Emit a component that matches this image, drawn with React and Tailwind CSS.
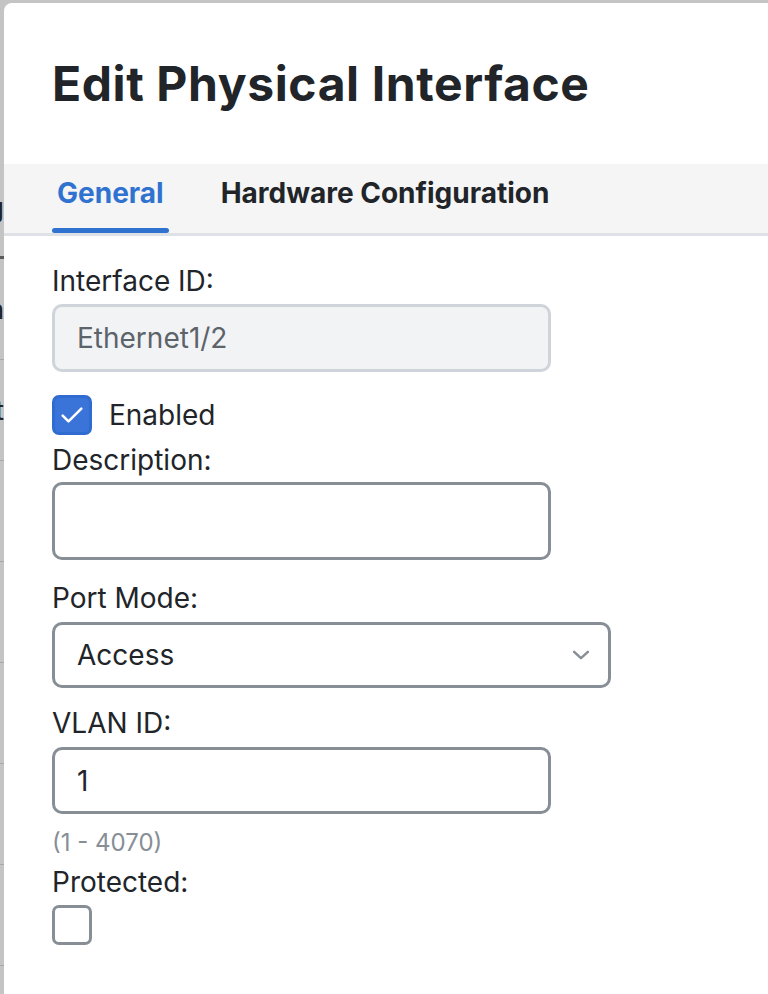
import React from "react";

const font = { fontFamily: "Inter, 'Liberation Sans', sans-serif" };

const Checkbox = ({ checked }) =>
  checked ? (
    <span className="flex h-[40px] w-[40px] shrink-0 items-center justify-center rounded-[7px] border-[3px] border-[#2f6bd1] bg-[#3a74d9]">
      <svg width="28" height="28" viewBox="0 0 24 24" fill="none">
        <path d="M4 12.5l5 5L20 6.5" stroke="#fff" strokeWidth="2.2" strokeLinecap="round" strokeLinejoin="round" />
      </svg>
    </span>
  ) : (
    <span className="block h-[40px] w-[40px] shrink-0 rounded-[7px] border-[3px] border-[#878e96] bg-white" />
  );

const Label = ({ children, className = "" }) => (
  <div className={`h-[30px] text-[28px] leading-[30px] text-[#212529] ${className}`}>{children}</div>
);

// bits of the page behind the modal, clipped at the left edge
const BackdropStrip = () => (
  <div className="flex w-[4px] shrink-0 flex-col items-end overflow-hidden">
    <div className="h-[158px] w-[60px] shrink-0" />
    {["Config", "Data", "Port", "", "", "", "", "", ""].map((t, i) => (
      <div
        key={i}
        className={`flex h-[101px] w-[60px] shrink-0 items-center justify-end text-[26px] text-[#222] ${
          i === 0 ? "border-b-[3px] border-[#5a5a5a]" : "border-b border-[#a9a9a9]"
        }`}
      >
        {t}
      </div>
    ))}
  </div>
);

export default function App() {
  return (
    <div className="flex h-[994px] w-[768px] overflow-hidden bg-[#c4c4c4]" style={font}>
      <BackdropStrip />
      <div className="flex flex-1 flex-col pt-[3px]">
        <div className="flex flex-1 flex-col rounded-tl-[8px] bg-white">
          <div className="flex h-[161px] items-center pl-[48px]">
            <h1 className="text-[48px] font-bold tracking-[0.6px] text-[#212529]">Edit Physical Interface</h1>
          </div>

          <div className="flex h-[72px] items-end gap-[47px] border-b-[3px] border-[#dee2e6] bg-[#f5f5f5] pl-[48px]">
            <div className="flex h-full flex-col justify-between">
              <span className="px-[5px] pt-[13px] text-[28px] font-bold leading-[32px] text-[#2f72d0]">General</span>
              <span className="block h-[5px] rounded-full bg-[#2f72d0]" />
            </div>
            <div className="flex h-full flex-col justify-between">
              <span className="px-[5px] pt-[13px] text-[28px] font-bold leading-[32px] text-[#212529]">
                Hardware Configuration
              </span>
              <span className="block h-[5px]" />
            </div>
          </div>

          <div className="flex flex-col pl-[48px]">
            <Label className="mt-[30px]">Interface ID:</Label>
            <div className="mt-[8px] flex h-[68px] w-[499px] items-center rounded-[10px] border-[3px] border-[#ced4da] bg-[#f1f3f5] px-[22px] text-[28px] text-[#5c636a]">
              Ethernet1/2
            </div>

            <label className="mt-[23px] flex items-center gap-[17px]">
              <Checkbox checked />
              <span className="text-[28px] leading-[30px] text-[#212529]">Enabled</span>
            </label>

            <Label className="mt-[10px]">Description:</Label>
            <div className="mt-[7px] h-[78px] w-[499px] rounded-[10px] border-[3px] border-[#878e96] bg-white" />

            <Label className="mt-[23px]">Port Mode:</Label>
            <div className="mt-[9px] flex h-[66px] w-[559px] items-center justify-between rounded-[10px] border-[3px] border-[#878e96] bg-white pl-[22px] pr-[17px] text-[28px] text-[#212529]">
              <span>Access</span>
              <svg width="20" height="20" viewBox="0 0 16 16" fill="none">
                <path d="M2.5 5.5l5.5 5 5.5-5" stroke="#868e96" strokeWidth="2" strokeLinecap="round" strokeLinejoin="round" />
              </svg>
            </div>

            <Label className="mt-[20px]">VLAN ID:</Label>
            <div className="mt-[9px] flex h-[67px] w-[499px] items-center rounded-[10px] border-[3px] border-[#878e96] bg-white px-[22px] text-[28px] text-[#212529]">
              1
            </div>
            <div className="mt-[16px] h-[26px] text-[24px] leading-[26px] text-[#878e96]">(1 - 4070)</div>

            <Label className="mt-[11px]">Protected:</Label>
            <div className="mt-[8px]">
              <Checkbox />
            </div>
          </div>
        </div>
      </div>
    </div>
  );
}
